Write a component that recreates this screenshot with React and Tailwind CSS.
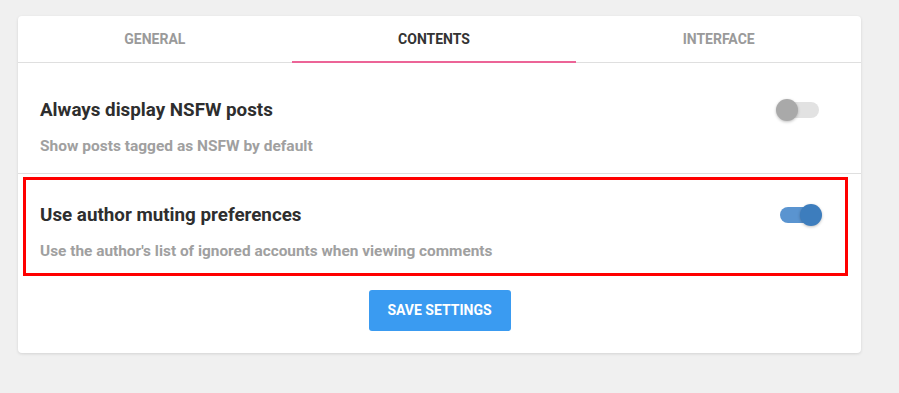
import React, { useState } from 'react';

const tabs = ['General', 'Contents', 'Interface'];

const Toggle = ({ on }) => (
  <div className="relative w-[46px] h-[22px] shrink-0">
    <div
      className={`absolute top-[3px] h-[16px] w-[40px] rounded-full ${
        on ? 'left-[4px] bg-[#5a94d0]' : 'left-[3px] bg-[#e2e2e2]'
      }`}
    />
    <div
      className={`absolute top-0 h-[22px] w-[22px] rounded-full shadow-[0_1px_3px_rgba(0,0,0,0.25)] ${
        on ? 'left-[24px] bg-[#3d7dbd]' : 'left-0 bg-[#a9a9a9]'
      }`}
    />
  </div>
);

const App = () => {
  const [active] = useState(1);

  return (
    <div className="min-h-[393px] w-full bg-[#f0f0f0] pt-[16px] pl-[18px] font-['Roboto',sans-serif]">
      <div className="w-[843px] bg-white rounded-[4px] shadow-[0_1px_3px_rgba(0,0,0,0.12)]">
        {/* Tabs */}
        <div className="flex border-b border-[#dfdfdf]">
          {tabs.map((tab, i) => (
            <div
              key={tab}
              className={`relative flex-auto h-[46px] flex items-center justify-center text-[14px] font-bold uppercase ${
                i === active ? 'text-[#333333]' : 'text-[#9a9a9a]'
              }`}
            >
              {tab}
              {i === active && (
                <div className="absolute left-0 right-0 bottom-[-1px] h-[2px] bg-[#ec6497]" />
              )}
            </div>
          ))}
        </div>

        {/* NSFW row */}
        <div className="pl-[22px] pr-[39px] pt-[35px] pb-[17px] border-b border-[#dfdfdf]">
          <div className="flex items-center justify-between">
            <div className="text-[18.8px] leading-[24px] font-bold text-[#2e2e2e]">Always display NSFW posts</div>
            <Toggle on={false} />
          </div>
          <div className="mt-[14px] text-[15.5px] leading-[20px] font-bold text-[#a0a0a0]">
            Show posts tagged as NSFW by default
          </div>
        </div>

        {/* Author muting row */}
        <div className="ml-[5px] mr-[13px] mt-[3px] border-[3px] border-[#ff0000] pl-[14px] pr-[23px] pt-[23px] pb-[12px]">
          <div className="flex items-center justify-between">
            <div className="text-[18.8px] leading-[24px] font-bold text-[#2e2e2e]">Use author muting preferences</div>
            <Toggle on={true} />
          </div>
          <div className="mt-[14px] text-[15.4px] leading-[20px] font-bold text-[#a0a0a0]">
            Use the author's list of ignored accounts when viewing comments
          </div>
        </div>

        <div className="flex justify-center pt-[14px] pb-[22px]">
          <button className="w-[142px] h-[41px] rounded-[3px] bg-[#3a9bf1] text-white text-[14px] font-bold uppercase">
            Save Settings
          </button>
        </div>
      </div>
    </div>
  );
};

export default App;
